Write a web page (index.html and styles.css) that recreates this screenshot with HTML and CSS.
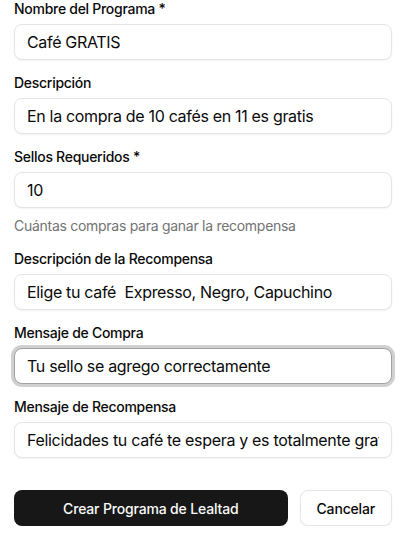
FILE: index.html
```html
<!DOCTYPE html>
<html lang="es">
<head>
<meta charset="utf-8">
<link rel="stylesheet" href="styles.css">
</head>
<body>
<form class="form">
  <div class="field">
    <label class="label">Nombre del Programa *</label>
    <input class="input" type="text" value="Café GRATIS">
  </div>
  <div class="field">
    <label class="label">Descripción</label>
    <input class="input" type="text" value="En la compra de 10 cafés en 11 es gratis">
  </div>
  <div class="field">
    <label class="label">Sellos Requeridos *</label>
    <input class="input" type="text" value="10">
    <p class="hint">Cuántas compras para ganar la recompensa</p>
  </div>
  <div class="field">
    <label class="label">Descripción de la Recompensa</label>
    <input class="input" type="text" value="Elige tu café  Expresso, Negro, Capuchino">
  </div>
  <div class="field">
    <label class="label">Mensaje de Compra</label>
    <input class="input focused" type="text" value="Tu sello se agrego correctamente">
  </div>
  <div class="field">
    <label class="label">Mensaje de Recompensa</label>
    <input class="input" type="text" value="Felicidades tu café te espera y es totalmente gratis">
  </div>
  <div class="actions">
    <button type="button" class="btn btn-primary">Crear Programa de Lealtad</button>
    <button type="button" class="btn btn-outline">Cancelar</button>
  </div>
</form>
</body>
</html>
```

FILE: styles.css
```css
* { box-sizing: border-box; }
html, body { margin: 0; padding: 0; background: #ffffff; }
body {
  font-family: Inter, "Noto Sans", "Liberation Sans", sans-serif;
  color: #0a0a0a;
}
.form {
  width: 378px;
  margin: 2px 0 0 14px;
  display: flex;
  flex-direction: column;
  gap: 16px;
}
.field {
  display: flex;
  flex-direction: column;
  gap: 8px;
}
.label {
  font-size: 14px;
  line-height: 14px;
  font-weight: 500;
  letter-spacing: -0.02em;
  color: #0a0a0a;
}
.input {
  height: 36px;
  width: 100%;
  border: 1px solid #e5e5e5;
  border-radius: 8px;
  padding: 0 12px;
  font-family: inherit;
  font-size: 16px;
  letter-spacing: -0.02em;
  color: #0a0a0a;
  background: #ffffff;
  box-shadow: 0 1px 2px rgba(0,0,0,0.05);
  outline: none;
}
.input.focused {
  border-color: #a1a1a1;
  box-shadow: 0 0 0 3px rgba(161,161,161,0.5);
}
.hint {
  margin: 0;
  font-size: 14px;
  line-height: 20px;
  letter-spacing: -0.02em;
  color: #737373;
}
.actions {
  display: flex;
  gap: 12px;
  margin-top: 16px;
}
.btn {
  height: 36px;
  border-radius: 8px;
  font-family: inherit;
  font-size: 14px;
  font-weight: 500;
  letter-spacing: -0.012em;
  padding: 0 16px;
  cursor: pointer;
}
.btn-primary {
  flex: 1;
  background: #171717;
  color: #fafafa;
  border: none;
}
.btn-outline {
  background: #ffffff;
  color: #0a0a0a;
  border: 1px solid #e5e5e5;
  box-shadow: 0 1px 2px rgba(0,0,0,0.05);
}
```
